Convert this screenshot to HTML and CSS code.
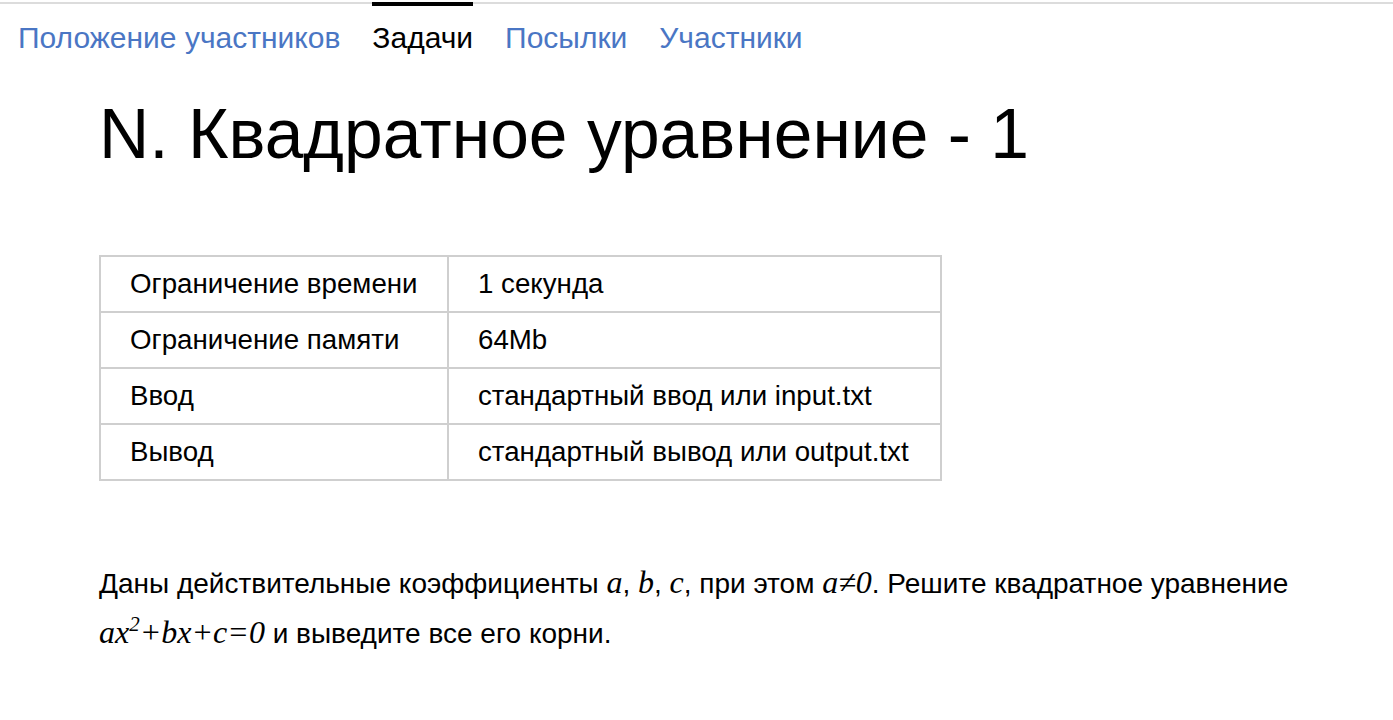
FILE: index.html
```html
<!DOCTYPE html>
<html lang="ru">
<head>
<meta charset="utf-8">
<link rel="stylesheet" href="styles.css">
</head>
<body>
<nav class="tabs">
  <a class="tab" href="#">Положение участников</a>
  <a class="tab active" href="#">Задачи</a>
  <a class="tab" href="#">Посылки</a>
  <a class="tab" href="#">Участники</a>
</nav>
<main class="problem">
  <h1 class="title">N. Квадратное уравнение - 1</h1>
  <table class="limits">
    <colgroup><col class="c1"><col class="c2"></colgroup>
    <tr><td>Ограничение времени</td><td>1 секунда</td></tr>
    <tr><td>Ограничение памяти</td><td>64Mb</td></tr>
    <tr><td>Ввод</td><td>стандартный ввод или input.txt</td></tr>
    <tr><td>Вывод</td><td>стандартный вывод или output.txt</td></tr>
  </table>
  <p class="legend">Даны действительные коэффициенты <span class="m">a</span>, <span class="m">b</span>, <span class="m">c</span>, при этом <span class="m">a≠0</span>. Решите квадратное уравнение <span class="m">ax<sup>2</sup>+bx+c=0</span> и выведите все его корни.</p>
</main>
</body>
</html>
```
FILE: styles.css
```css
html, body {
  margin: 0;
  padding: 0;
  background: #fff;
  font-family: "Liberation Sans", Arial, sans-serif;
  color: #000;
}
body {
  padding-top: 2px;
}
.tabs {
  display: flex;
  gap: 32px;
  padding: 0 0 0 18px;
  border-top: 2px solid #dcdcdc;
}
.tab {
  font-size: 30px;
  line-height: 34px;
  padding-top: 15px;
  margin-top: -2px;
  border-top: 4px solid transparent;
  color: #4a76c4;
  text-decoration: none;
}
.tab.active {
  color: #000;
  border-top-color: #000;
}
.problem {
  padding: 0 99px;
}
.title {
  font-weight: normal;
  font-size: 69.6px;
  line-height: 80px;
  margin: 39px 0 0 0;
}
.limits {
  margin-top: 81px;
  border-collapse: collapse;
  table-layout: fixed;
  width: 841px;
  font-size: 27.7px;
}
.limits .c1 { width: 348px; }
.limits .c2 { width: 493px; }
.limits td {
  border: 2px solid #cfcfcf;
  height: 54px;
  padding: 0 0 0 29px;
  white-space: nowrap;
}
.legend {
  margin: 78px 0 0 0;
  font-size: 28px;
  line-height: 50px;
}
.m {
  font-family: "Liberation Serif", "Times New Roman", serif;
  font-style: italic;
  font-size: 32px;
  line-height: 0;
}
.m sup {
  font-size: 21px;
  line-height: 0;
}
```
